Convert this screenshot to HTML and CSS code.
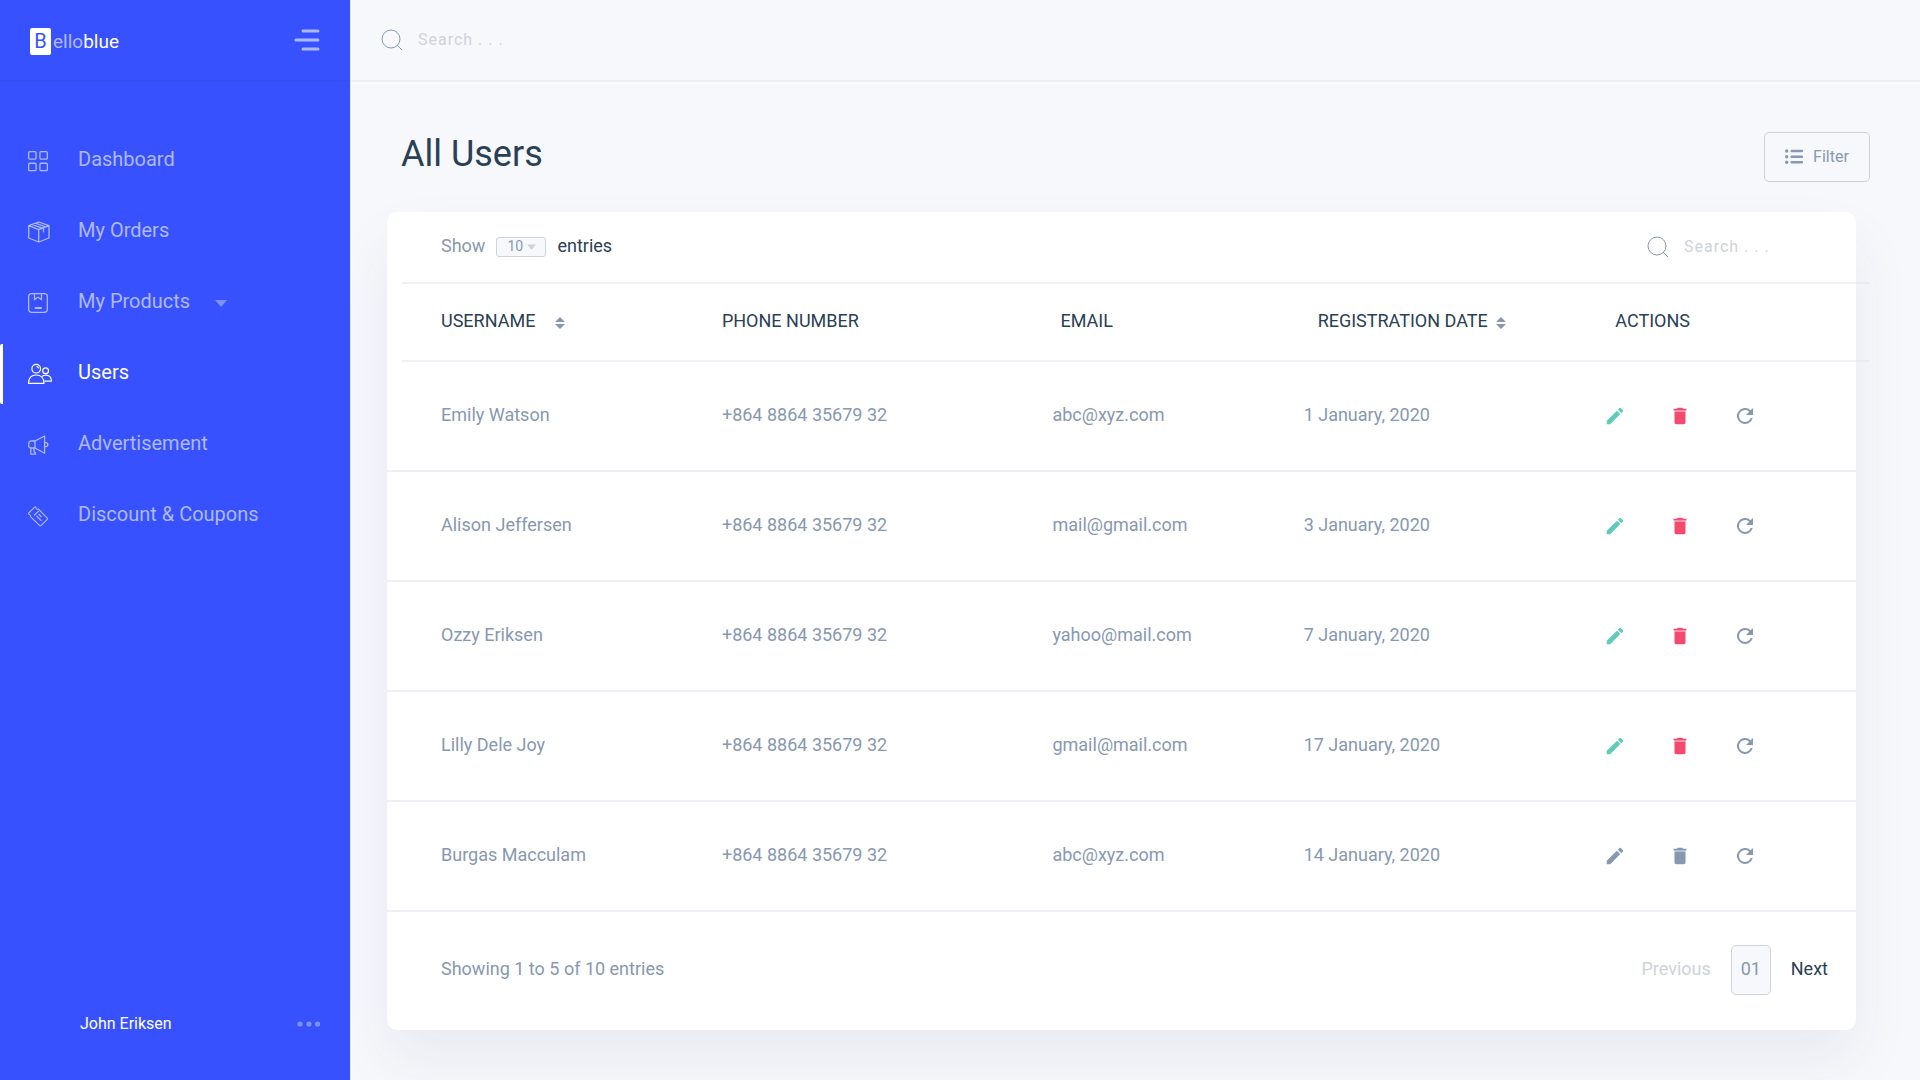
FILE: index.html
```html
<!DOCTYPE html>
<html lang="en">
<head>
<meta charset="utf-8">
<meta name="viewport" content="width=device-width, initial-scale=1">
<title>Belloblue - All Users</title>
<link rel="stylesheet" href="styles.css">
</head>
<body>
<svg class="sprite" aria-hidden="true">
  <symbol id="search" viewBox="0 0 22 22"><g fill="none" stroke="currentColor"><circle cx="10" cy="10" r="9"/><path d="M16 16l5 5"/></g></symbol>
  <symbol id="edit" viewBox="0 0 24 24"><path fill="currentColor" d="M3 17.25V21h3.75L17.81 9.94l-3.75-3.75L3 17.25zM20.71 7.04a1 1 0 0 0 0-1.41l-2.34-2.34a1 1 0 0 0-1.41 0l-1.83 1.83 3.75 3.75 1.83-1.83z"/></symbol>
  <symbol id="trash" viewBox="0 0 24 24"><path fill="currentColor" d="M6 19a2 2 0 0 0 2 2h8a2 2 0 0 0 2-2V7H6v12zM19 4h-3.500l-1-1h-5l-1 1H5v2h14V4z"/><path fill="currentColor" opacity=".5" d="M6 6h12v1H6z"/></symbol>
  <symbol id="refresh" viewBox="0 0 24 24"><path fill="currentColor" d="M17.65 6.35A8 8 0 1 0 19.73 14h-2.080A6 6 0 1 1 12 6c1.660 0 3.140.69 4.220 1.780L13 11h7V4l-2.350 2.350z"/></symbol>
  <symbol id="sort" viewBox="0 0 10 14"><path fill="currentColor" d="M0 6l5-5 5 5zM0 8h10l-5 5z"/></symbol>
  <symbol id="caret" viewBox="0 0 12 7"><path fill="currentColor" d="M0 0h12L6 7z"/></symbol>
</svg>
<div class="app">
  <aside class="sidebar">
    <div class="sidebar-head">
      <a class="logo" href="#"><span class="logo-mark">B</span><span class="logo-light">ello</span>blue</a>
      <button class="menu-toggle" type="button" aria-label="Toggle menu">
        <svg width="28" height="22" viewBox="0 0 28 22" fill="none" stroke="currentColor" stroke-width="3" stroke-linecap="round"><path d="M9 2h15M2 11h22M9 20h15"/></svg>
      </button>
    </div>
    <nav class="nav">
      <a class="nav-item" href="#">
        <svg width="24" height="24" viewBox="0 0 24 24" fill="none" stroke="currentColor" stroke-width="1.300"><rect x=".65" y="2.650" width="7.400" height="7.400" rx="1"/><rect x="11.950" y="2.650" width="7.400" height="7.400" rx="1"/><rect x=".65" y="14.250" width="7.400" height="7.400" rx="1"/><rect x="11.950" y="14.250" width="7.400" height="7.400" rx="1"/></svg>
        <span class="nav-label">Dashboard</span>
      </a>
      <a class="nav-item" href="#">
        <svg width="24" height="24" viewBox="0 0 24 24" fill="none" stroke="currentColor" stroke-width="1.300" stroke-linejoin="round"><path d="M10.700 2L21 5.700v12.300l-10.300 4L.7 18V5.700zM.7 5.700l10 4 10.300-4M10.700 9.700V22M4 4.400l11.500 4.200v4M7.500 3.200L18 7"/></svg>
        <span class="nav-label">My Orders</span>
      </a>
      <a class="nav-item" href="#">
        <svg width="24" height="24" viewBox="0 0 24 24" fill="none" stroke="currentColor" stroke-width="1.300"><rect x=".65" y="2.650" width="18.700" height="18.700" rx="3"/><path d="M6.500 3v5.500L10 6.300l3.500 2.200V3"/><path d="M7.500 17h5.500" stroke-width="2" stroke-linecap="round"/></svg>
        <span class="nav-label">My Products</span>
        <svg class="nav-caret" width="12" height="7"><use href="#caret"/></svg>
      </a>
      <a class="nav-item active" href="#" aria-current="page">
        <svg width="24" height="24" viewBox="0 0 24 24" fill="none" stroke="currentColor" stroke-width="1.200" stroke-linejoin="round"><circle cx="8.200" cy="6.700" r="4.300"/><path d="M8.500 4.400a2.300 2.300 0 0 1 2 2M.6 21.400C.6 16.200 3.500 13 8.200 13s7.800 3.200 7.800 8.400z"/><circle cx="17.600" cy="8.800" r="2.900"/><path d="M13.800 14.600c1-1 2.300-1.400 3.800-1.400 3.500 0 5.800 2.200 5.800 5.900H16.500"/></svg>
        <span class="nav-label">Users</span>
      </a>
      <a class="nav-item" href="#">
        <svg width="24" height="24" viewBox="0 0 24 24" fill="none" stroke="currentColor" stroke-width="1.300" stroke-linejoin="round"><path d="M16.600 3v17.200L7 15V8zM7 8H3A2.300 2.300 0 0 0 .7 10.300v2.400A2.300 2.300 0 0 0 3 15h4M16.600 9.600h1.200a2 2 0 0 1 0 4h-1.200M2.800 15v6.200h4.700V20l-1.500-1.500V15"/></svg>
        <span class="nav-label">Advertisement</span>
      </a>
      <a class="nav-item" href="#">
        <svg width="24" height="24" viewBox="0 0 24 24" fill="none" stroke="currentColor" stroke-width="1.100" stroke-linejoin="round"><path d="M6.600 3.200L.8 9c-.4.400-.4.800 0 1.200l1.100.7c.8.300 1 1 .6 1.700l9.300 9.100c.4.400.8.400 1.200 0l6.300-6.400c.4-.4.400-.8 0-1.200l-9-9.100c-.7.600-1.500.4-1.900-.3L7.800 3.200c-.4-.4-.8-.4-1.200 0z"/><path d="M6 11.500l4.800-4.700M8.500 12l5 4.800M10.500 10l3 3"/></svg>
        <span class="nav-label">Discount &amp; Coupons</span>
      </a>
    </nav>
    <div class="profile">
      <span class="profile-name">John Eriksen</span>
      <button class="profile-menu" type="button" aria-label="Account options">
        <svg width="24" height="6" viewBox="0 0 24 6" fill="currentColor"><circle cx="3" cy="3" r="2.600"/><circle cx="12" cy="3" r="2.600"/><circle cx="20.500" cy="3" r="2.600"/></svg>
      </button>
    </div>
  </aside>

  <div class="content">
    <header class="topbar">
      <label class="search"><svg width="22" height="22" aria-hidden="true"><use href="#search"/></svg><input type="search" placeholder="Search . . ." aria-label="Search the site"></label>
    </header>
    <main class="main">
      <div class="page-head">
        <h1 class="page-title">All Users</h1>
        <button class="filter" type="button">
          <svg width="18" height="16" viewBox="0 0 18 16" fill="currentColor"><circle cx="1.700" cy="2" r="1.700"/><circle cx="1.700" cy="7.700" r="1.700"/><circle cx="1.700" cy="13.300" r="1.700"/><rect x="5.500" y=".8" width="12.500" height="2.400" rx="1"/><rect x="5.500" y="6.500" width="12.500" height="2.400" rx="1"/><rect x="5.500" y="12.100" width="12.500" height="2.400" rx="1"/></svg>
          <span class="filter-label">Filter</span>
        </button>
      </div>
      <section class="card">
        <div class="card-head">
          <div class="entries">
            <label class="entries-show" for="page-size">Show</label>
            <span class="select">
              <select id="page-size"><option>10</option><option>25</option><option>50</option></select>
              <svg class="select-caret" width="9" height="6"><use href="#caret"/></svg>
            </span>
            <span class="entries-unit">entries</span>
          </div>
          <label class="search"><svg width="22" height="22" aria-hidden="true"><use href="#search"/></svg><input type="search" placeholder="Search . . ." aria-label="Search users"></label>
        </div>
        <table class="users">
          <colgroup><col class="col-name"><col class="col-phone"><col class="col-email"><col class="col-date"><col></colgroup>
          <thead>
            <tr>
              <th scope="col">USERNAME<svg class="sort sort-wide" width="10" height="14"><use href="#sort"/></svg></th>
              <th scope="col">PHONE NUMBER</th>
              <th scope="col" class="th-email">EMAIL</th>
              <th scope="col" class="th-date">REGISTRATION DATE<svg class="sort" width="10" height="14"><use href="#sort"/></svg></th>
              <th scope="col" class="th-actions">ACTIONS</th>
            </tr>
          </thead>
          <tbody>
            <tr><td>Emily Watson</td><td>+864 8864 35679 32</td><td>abc@xyz.com</td><td>1 January, 2020</td>
              <td><div class="actions"><button class="edit" type="button" aria-label="Edit"><svg width="22" height="22"><use href="#edit"/></svg></button><button class="trash" type="button" aria-label="Delete"><svg width="22" height="22"><use href="#trash"/></svg></button><button type="button" aria-label="Refresh"><svg width="24" height="24"><use href="#refresh"/></svg></button></div></td></tr>
            <tr><td>Alison Jeffersen</td><td>+864 8864 35679 32</td><td>mail@gmail.com</td><td>3 January, 2020</td>
              <td><div class="actions"><button class="edit" type="button" aria-label="Edit"><svg width="22" height="22"><use href="#edit"/></svg></button><button class="trash" type="button" aria-label="Delete"><svg width="22" height="22"><use href="#trash"/></svg></button><button type="button" aria-label="Refresh"><svg width="24" height="24"><use href="#refresh"/></svg></button></div></td></tr>
            <tr><td>Ozzy Eriksen</td><td>+864 8864 35679 32</td><td>yahoo@mail.com</td><td>7 January, 2020</td>
              <td><div class="actions"><button class="edit" type="button" aria-label="Edit"><svg width="22" height="22"><use href="#edit"/></svg></button><button class="trash" type="button" aria-label="Delete"><svg width="22" height="22"><use href="#trash"/></svg></button><button type="button" aria-label="Refresh"><svg width="24" height="24"><use href="#refresh"/></svg></button></div></td></tr>
            <tr><td>Lilly Dele Joy</td><td>+864 8864 35679 32</td><td>gmail@mail.com</td><td>17 January, 2020</td>
              <td><div class="actions"><button class="edit" type="button" aria-label="Edit"><svg width="22" height="22"><use href="#edit"/></svg></button><button class="trash" type="button" aria-label="Delete"><svg width="22" height="22"><use href="#trash"/></svg></button><button type="button" aria-label="Refresh"><svg width="24" height="24"><use href="#refresh"/></svg></button></div></td></tr>
            <tr><td>Burgas Macculam</td><td>+864 8864 35679 32</td><td>abc@xyz.com</td><td>14 January, 2020</td>
              <td><div class="actions"><button type="button" aria-label="Edit"><svg width="22" height="22"><use href="#edit"/></svg></button><button type="button" aria-label="Delete"><svg width="22" height="22"><use href="#trash"/></svg></button><button type="button" aria-label="Refresh"><svg width="24" height="24"><use href="#refresh"/></svg></button></div></td></tr>
          </tbody>
        </table>
        <div class="card-foot">
          <span class="summary">Showing 1 to 5 of 10 entries</span>
          <div class="pager">
            <button class="pager-prev" type="button">Previous</button>
            <button class="pager-page" type="button" aria-current="page">01</button>
            <button class="pager-next" type="button">Next</button>
          </div>
        </div>
      </section>
    </main>
  </div>
</div>
</body>
</html>
```

FILE: styles.css
```css
:root {
  --blue: #3751ff;
  --bg: #f7f8fc;
  --ink: #2a4055;
  --muted: #8798b1;
  --faint: #ced3da;
  --line: #efeff6;
}

* { box-sizing: border-box; }

body {
  margin: 0;
  background: var(--bg);
  color: var(--ink);
  font-family: Roboto, "Liberation Sans", sans-serif;
  font-size: 18px;
}

button {
  padding: 0;
  border: 0;
  background: none;
  color: inherit;
  font: inherit;
  cursor: pointer;
}

a { color: inherit; text-decoration: none; }
svg { display: block; flex: none; }
.sprite { display: none; }

.app {
  display: grid;
  grid-template-columns: 351px minmax(0, 1fr);
  min-height: 100vh;
}

/* Sidebar */
.sidebar {
  z-index: 1;
  display: flex;
  flex-direction: column;
  border-right: 1px solid #e3e6ee;
  background: var(--blue);
  color: #afb9ff;
}

.sidebar-head {
  display: flex;
  align-items: center;
  justify-content: space-between;
  height: 82px;
  padding: 0 28px 0 30px;
  border-bottom: 2px solid #364ff5;
}

.logo {
  display: flex;
  align-items: center;
  padding-top: 2px;
  color: #fff;
  font-size: 19px;
}

.logo-mark {
  width: 21px;
  height: 27px;
  margin-right: 2px;
  border-radius: 2px;
  background: #fff;
  color: var(--blue);
  font-size: 20px;
  line-height: 27px;
  text-align: center;
}

.logo-light { color: #afb9ff; }

.nav {
  display: flex;
  flex-direction: column;
  gap: 11px;
  padding-top: 49px;
}

.nav-item {
  display: flex;
  align-items: center;
  height: 60px;
  padding-left: 28px;
  font-size: 20px;
}

.nav-label { padding: 0 0 4px 26px; }
.nav-caret { margin-left: 25px; color: #7f90ff; }

.nav-item.active {
  padding-left: 25px;
  border-left: 3px solid #fff;
  border-radius: 2px;
  color: #fff;
}

.profile {
  display: flex;
  align-items: center;
  justify-content: space-between;
  margin-top: auto;
  padding: 0 29px 45px 80px;
  color: #fff;
  font-size: 16px;
  line-height: 22px;
}

.profile-menu { color: #7f90ff; }

/* Search fields */
.search {
  display: flex;
  align-items: center;
  gap: 15px;
  color: var(--muted);
}

.search input {
  width: 112px;
  padding: 0 0 2px;
  border: 0;
  outline: 0;
  background: none;
  color: var(--ink);
  font: inherit;
  font-size: 16px;
  letter-spacing: 1px;
}

.search input::placeholder { color: var(--faint); }

/* Page */
.topbar {
  display: flex;
  align-items: center;
  height: 82px;
  padding-left: 30px;
  border-bottom: 2px solid #eceef3;
}

.main { padding: 50px 64px 50px 36px; }

.page-head {
  display: flex;
  align-items: center;
  justify-content: space-between;
  margin: 0 -14px 30px 14px;
}

.page-title {
  margin: 0;
  padding-bottom: 6px;
  font-size: 36px;
  font-weight: 400;
  line-height: 44px;
}

.filter {
  display: flex;
  align-items: center;
  justify-content: center;
  gap: 10px;
  width: 106px;
  height: 50px;
  border: 1px solid #cdd0d6;
  border-radius: 5px;
  color: var(--muted);
  font-size: 16px;
}

.filter-label { padding-bottom: 2px; }

/* Users card */
.card {
  border-radius: 10px;
  background: #fff;
  box-shadow: 0 30px 60px rgba(36, 52, 92, .07);
}

.card-head {
  display: flex;
  align-items: center;
  justify-content: space-between;
  height: 72px;
  margin: 0 -14px 0 15px;
  padding: 0 74px 0 39px;
  border-bottom: 2px solid rgba(226, 226, 238, .5);
}

.entries { display: flex; align-items: center; gap: 11px; }
.entries-show { padding-bottom: 3px; color: var(--muted); }
.entries-unit { padding-bottom: 3px; }
.select { position: relative; display: flex; color: var(--muted); }

.select select {
  width: 50px;
  height: 20px;
  padding: 0 0 2px 10px;
  border: 1px solid #ced3da;
  border-radius: 3px;
  background: var(--bg);
  color: inherit;
  font: inherit;
  font-size: 14px;
  line-height: 16px;
  appearance: none;
}

.select-caret {
  position: absolute;
  top: 7px;
  right: 10px;
  color: #ced3da;
  pointer-events: none;
}

.users {
  width: 100%;
  border-collapse: separate;
  border-spacing: 0;
  table-layout: fixed;
  text-align: left;
}

.col-name { width: 22.8%; }
.col-phone { width: 22.5%; }
.col-email { width: 17.1%; }
.col-date { width: 20.4%; }

.users thead tr { position: relative; }

/* Header rule, wider than the card on the right */
.users th:first-child::after {
  content: "";
  position: absolute;
  right: -14px;
  bottom: 0;
  left: 15px;
  height: 2px;
  background: rgba(226, 226, 238, .5);
}

.users th {
  height: 78px;
  padding: 0 0 6px;
  font-weight: 400;
}

.users td {
  height: 110px;
  padding: 0 0 4px;
  border-bottom: 2px solid var(--line);
  color: var(--muted);
}

.users th:first-child,
.users td:first-child { padding-left: 54px; }

.users .th-email { padding-left: 8px; }
.users .th-date { padding-left: 14px; }
.users .th-actions { padding-left: 12px; }

.sort {
  display: inline-block;
  margin-left: 8px;
  color: var(--muted);
  vertical-align: -3px;
}

.sort-wide { margin-left: 20px; }

.actions { display: flex; gap: 41px; padding-top: 4px; }

.actions button {
  display: grid;
  place-items: center;
  width: 24px;
  height: 24px;
}

.actions .edit { color: #5fcbb9; }
.actions .trash { color: #f44a70; }

.card-foot {
  display: flex;
  align-items: center;
  justify-content: space-between;
  height: 118px;
  padding: 0 28px 2px 54px;
  color: var(--muted);
}

.summary { padding-bottom: 3px; }
.pager { display: flex; align-items: center; gap: 20px; }
.pager-prev { padding-bottom: 3px; color: var(--faint); }
.pager-next { padding-bottom: 3px; color: var(--ink); }

.pager-page {
  width: 40px;
  height: 50px;
  padding-bottom: 3px;
  border: 1px solid #ced3da;
  border-radius: 5px;
  background: var(--bg);
}
```
